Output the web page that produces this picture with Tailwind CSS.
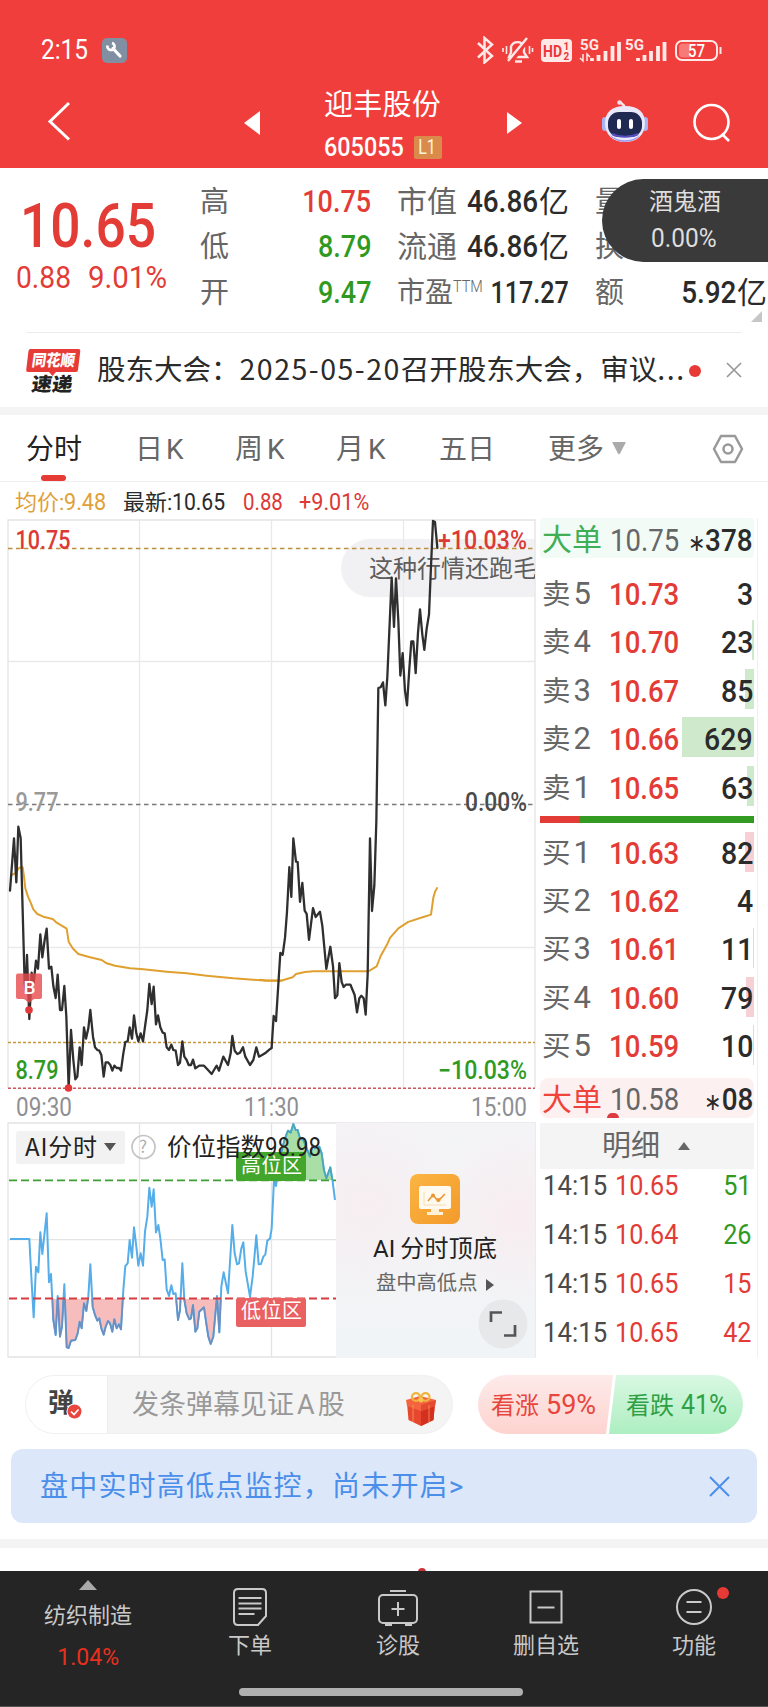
<!DOCTYPE html>
<html lang="zh-CN">
<head>
<meta charset="utf-8">
<title>迎丰股份 605055</title>
<script src="https://cdn.jsdelivr.net/npm/@tailwindcss/browser@4"></script>
</head>
<body class="w-[768px] h-[1707px] overflow-hidden bg-white font-[Roboto,'Noto_Sans_CJK_SC',sans-serif] text-[#2b2b2b]">
<div class="flex flex-col w-[768px] h-[1707px]">

<!-- header -->
<header class="h-[168px] shrink-0 bg-[#f03e3c] text-white flex flex-col">
  <div class="h-[84px] pt-[36px] pl-[41px] pr-[46px] flex justify-between">
    <div class="flex h-[28px] items-center">
      <span class="w-[61px] text-[28px] leading-[28px]"><span class="inline-block origin-left scale-x-[.87]">2:15</span></span>
      <svg class="w-[25px] h-[25px]" viewBox="0 0 25 25"><rect width="25" height="25" rx="5" fill="#8090a2"/><path d="M11 10.500l7 7.500" stroke="#fff" stroke-width="3.200" stroke-linecap="round"/><path d="M5.500 7.500a3.600 3.600 0 1 0 4.500-2.500" fill="none" stroke="#fff" stroke-width="2.600"/></svg>
    </div>
    <svg class="w-[246px] h-[28px]" viewBox="476 35 246 28" fill="none" stroke="#ffe9e7" stroke-width="2">
      <path d="M478 42l14 13-7.500 6.500V37l7.500 6.500-14 13" stroke-width="2.500"/>
      <path d="M509 56h18l-3-4.500v-6a7 7 0 0 0-13 0v6z" stroke-width="2.400"/><path d="M511 60l17-22" stroke="#f03e3c" stroke-width="5"/><path d="M508 60l19-23M515 60.500h7" stroke-width="2.400"/><path d="M506.500 45v8M503 47v4M529.500 45v8M532.500 47v4" stroke-width="1.600"/>
      <rect x="541" y="38" width="31" height="23" rx="4" fill="#ffe9e7" stroke="none"/>
      <g stroke="none" fill="#ffe9e7" font-family="Roboto" font-weight="500">
        <text x="543" y="56" font-size="17" fill="#e93a38" font-weight="700" textLength="19" lengthAdjust="spacingAndGlyphs">HD</text>
        <text x="563.500" y="49" font-size="10" fill="#e93a38" font-weight="700">1</text><text x="563.500" y="59" font-size="10" fill="#e93a38" font-weight="700">2</text>
        <text x="580" y="49" font-size="15" font-weight="700" textLength="19" lengthAdjust="spacingAndGlyphs">5G</text><text x="625" y="49" font-size="15" font-weight="700" textLength="19" lengthAdjust="spacingAndGlyphs">5G</text>
      </g>
      <path d="M592 60v-3M598.500 60v-6M605.500 60v-10M612.500 60v-15M619 60v-19M638 60v-3M644.500 60v-6M651 60v-10M658 60v-15M664.500 60v-19" stroke-width="3.800"/>
      <path d="M583 53v7l-3-3M587 60v-7l3 3" stroke-width="1.500"/>
      <path d="M683 42.500h7v14h-7a4 4 0 0 1-4-4v-6a4 4 0 0 1 4-4z" fill="#f77a78" stroke="none"/><rect x="676" y="40" width="41" height="19" rx="6"/><path d="M720.500 46v7"/>
      <text x="688" y="56" font-size="18" font-family="Roboto" font-weight="500" fill="#fff" stroke="none" textLength="17" lengthAdjust="spacingAndGlyphs">57</text>
    </svg>
  </div>
  <div class="h-[84px] flex items-start pl-[46px]">
    <svg class="w-[26px] h-[42px] mt-[17px]" viewBox="0 0 26 42"><path d="M23 2L4 20.500l19 18" fill="none" stroke="#fff" stroke-width="3"/></svg>
    <svg class="w-[16px] h-[24px] mt-[27px] ml-[172px]" viewBox="0 0 16 24"><path d="M16 0v24L0 12z" fill="#fff"/></svg>
    <div class="w-[245px] flex flex-col items-center">
      <h1 class="h-[38px] leading-[38px] text-[29px] tracking-[.3px] mt-[2px] whitespace-nowrap">迎丰股份</h1>
      <div class="flex items-center h-[24px] mt-[11px] w-[118px] justify-between">
        <span class="w-[80px] text-[26px] leading-[24px] font-medium"><span class="inline-block origin-left scale-x-[.9]">605055</span></span>
        <span class="w-[28px] h-[23px] leading-[23px] rounded-[2px] bg-[#da8b4b] text-[#fff4dd] text-[20px] text-center"><span class="inline-block scale-x-[.8]">L1</span></span>
      </div>
    </div>
    <svg class="w-[15px] h-[22px] mt-[28px] ml-[2px]" viewBox="0 0 15 22"><path d="M0 0l15 11L0 22z" fill="#fff"/></svg>
    <svg class="w-[46px] h-[46px] mt-[15px] ml-[80px]" viewBox="0 0 46 46"><path d="M22 8c0-4-4-3-4-6" fill="none" stroke="#fbe9ef" stroke-width="2.500"/><circle cx="17.500" cy="3.500" r="2.300" fill="#f3dfe8"/><rect x="0" y="18" width="6" height="14" rx="3" fill="#a9b4f2"/><rect x="40" y="18" width="6" height="14" rx="3" fill="#a9b4f2"/><path d="M23 7c14 0 20 7 20 17 0 12-8 19-20 19S3 36 3 24C3 14 9 7 23 7z" fill="#e9e9fb"/><path d="M8 36c8 7 22 7 30 0-5 9-25 9-30 0z" fill="#9c98ee"/><rect x="6" y="13" width="34" height="25" rx="11" fill="#202952"/><path d="M10 35c7 3.500 19 3.500 26 0" stroke="#554dc0" stroke-width="2" fill="none"/><rect x="15" y="20" width="4" height="10" rx="2" fill="#fff"/><rect x="27" y="20" width="4" height="10" rx="2" fill="#fff"/></svg>
    <svg class="w-[40px] h-[40px] mt-[19px] ml-[44px]" viewBox="0 0 40 40" fill="none" stroke="#fff" stroke-width="2.600"><circle cx="19.500" cy="19" r="17"/><path d="M30 31l7 7"/></svg>
  </div>
</header>

<!-- quote -->
<section class="relative h-[164px] shrink-0 pt-[10px] flex text-[#666]">
  <div class="w-[200px] text-[#e33c36]">
    <div class="mt-[20px] h-[56px] leading-[56px] pl-[20px] text-[62px] font-medium"><span class="inline-block origin-left scale-x-[.86]">10.65</span></div>
    <div class="flex mt-[8px] h-[32px] leading-[32px] pl-[16px] text-[31px]"><span class="w-[72px]"><span class="inline-block origin-left scale-x-[.91]">0.88</span></span><span class="inline-block origin-left scale-x-[.95]">9.01%</span></div>
  </div>
  <div class="w-[171px] text-[29px] leading-[48px]">
    <div class="flex justify-between h-[45px]"><span>高</span><span class="text-[31px] font-medium text-[#e33c36] origin-right scale-x-[.87]">10.75</span></div>
    <div class="flex justify-between h-[46px]"><span>低</span><span class="text-[31px] font-medium text-[#2f9a1f] origin-right scale-x-[.87]">8.79</span></div>
    <div class="flex justify-between h-[46px]"><span>开</span><span class="text-[31px] font-medium text-[#2f9a1f] origin-right scale-x-[.87]">9.47</span></div>
  </div>
  <div class="ml-[26px] w-[172px] text-[30px] leading-[48px]">
    <div class="flex justify-between h-[45px]"><span>市值</span><span class="flex text-[#2b2b2b]"><span class="text-[31px] font-medium origin-right scale-x-[.9]">46.86</span><span class="ml-[1px]">亿</span></span></div>
    <div class="flex justify-between h-[46px]"><span>流通</span><span class="flex text-[#2b2b2b]"><span class="text-[31px] font-medium origin-right scale-x-[.9]">46.86</span><span class="ml-[1px]">亿</span></span></div>
    <div class="flex h-[46px]"><span class="w-[56px] text-[28px]">市盈</span><span class="w-[28px] text-[17px] font-light -mt-[7px]"><span class="inline-block origin-left scale-x-[.85]">TTM</span></span><span class="w-[88px] flex justify-end text-[31px] font-medium text-[#2b2b2b]"><span class="origin-right scale-x-[.81]">117.27</span></span></div>
  </div>
  <div class="ml-[26px] w-[172px] text-[29px] leading-[48px]">
    <div class="h-[45px]">量</div>
    <div class="h-[46px]">换</div>
    <div class="flex justify-between h-[46px]"><span>额</span><span class="flex text-[#2b2b2b] text-[30px]"><span class="text-[31px] font-medium origin-right scale-x-[.9]">5.92</span><span class="ml-[1px]">亿</span></span></div>
  </div>
  <div class="absolute right-0 top-[11px] w-[166px] h-[83px] rounded-l-full bg-[#3a3a3a] text-[#dedede] pl-[47px] pt-[6px]">
    <div class="h-[34px] leading-[35px] text-[24px]">酒鬼酒</div>
    <div class="h-[36px] leading-[39px] text-[26px] pl-[2px]"><span class="inline-block origin-left scale-x-[.94]">0.00%</span></div>
  </div>
  <svg class="absolute right-[6px] top-[143px] w-[11px] h-[11px]" viewBox="0 0 11 11"><path d="M11 0v11H0z" fill="#c6c6c6"/></svg>
</section>

<!-- news -->
<section class="h-[75px] shrink-0 mx-[26px] border-t border-[#ededed] flex items-center">
  <svg class="w-[56px] h-[48px] mt-[1px]" viewBox="0 0 56 48"><path d="M4.500 2h48q2 0 1.800 2l-2.300 19q-.3 2-2 2H30l-3.500 4-3.500-4H2q-2 0-1.800-2l2.300-19q.3-2 2-2z" fill="#e63b37"/><g font-family="'Noto Sans CJK SC'" font-weight="900" transform="skewX(-8)"><text x="8" y="19.500" font-size="16" fill="#fff" textLength="43" lengthAdjust="spacingAndGlyphs">同花顺</text><text x="11" y="44" font-size="19" fill="#222" textLength="41" lengthAdjust="spacingAndGlyphs">速递</text></g></svg>
  <p class="ml-[15px] -mt-[4px] w-[592px] text-[28.500px] leading-[40px] whitespace-nowrap font-['Noto_Sans_CJK_SC',sans-serif]">股东大会：<span class="tracking-[1.500px]">2025-05-20</span>召开股东大会，审议<span class="tracking-[1.500px]">...</span></p>
  <span class="w-[12px] h-[12px] rounded-full bg-[#e73a36] mt-[1px]"></span>
  <svg class="w-[16px] h-[16px] ml-[25px]" viewBox="0 0 16 16"><path d="M1 1l14 14M15 1L1 15" stroke="#999" stroke-width="1.700"/></svg>
</section>
<div class="h-[8px] shrink-0 bg-[#f4f4f5]"></div>

<!-- period tabs -->
<nav class="h-[67px] shrink-0 border-b border-[#efefef] flex text-[28px] leading-[69px] text-[#666] whitespace-nowrap">
  <div class="ml-[26px] w-[109px] flex flex-col text-[#222]"><span class="h-[60px]">分时</span><span class="ml-[15px] w-[25px] h-[6px] rounded-full bg-[#e63b35]"></span></div>
  <span class="w-[100px]">日<span class="ml-[3px]">K</span></span>
  <span class="w-[101px]">周<span class="ml-[4px]">K</span></span>
  <span class="w-[103px]">月<span class="ml-[4px]">K</span></span>
  <span class="w-[109px]">五日</span>
  <span class="w-[64px]">更多</span>
  <svg class="w-[14px] h-[13px] mt-[27px]" viewBox="0 0 14 13"><path d="M1 0h12q1 0 .5 1L8 11.500q-1 1.500-2 0L.5 1Q0 0 1 0z" fill="#aaa"/></svg>
  <svg class="w-[32px] h-[30px] mt-[19px] ml-[86px]" viewBox="0 0 32 30" fill="none" stroke="#999" stroke-width="2.500" stroke-linejoin="round"><path d="M9 2h14l7 13-7 13H9L2 15z"/><circle cx="16" cy="15" r="4.500"/></svg>
</nav>

<!-- legend -->
<div class="h-[36px] shrink-0 flex pl-[15px] leading-[40px] text-[22px] whitespace-nowrap">
  <span class="w-[108px] text-[#e0a03a]">均价:<span class="inline-block origin-left scale-x-[.92] text-[23.500px]">9.48</span></span>
  <span class="w-[120px]">最新:<span class="inline-block origin-left scale-x-[.9] text-[23.500px]">10.65</span></span>
  <span class="w-[56px] text-[#dc3a36]"><span class="inline-block origin-left scale-x-[.87] text-[23.500px]">0.88</span></span>
  <span class="text-[#dc3a36]"><span class="inline-block origin-left scale-x-[.92] text-[23.500px]">+9.01%</span></span>
</div>

<!-- chart and order book -->
<main class="h-[841px] shrink-0 flex">
  <div class="w-[536px] flex flex-col">
    <svg class="w-[536px] h-[604px] shrink-0" viewBox="0 518 536 604">
      <path d="M139.500 520v568M271.500 520v568M403.500 520v568M8 661.500h527M8 947.500h527" stroke="#e9e9e9" stroke-width="1.300"/>
      <path d="M8 1088V520h527v568" fill="none" stroke="#e4e4e4" stroke-width="1.300"/>
      <path d="M535 539H370a29 29 0 0 0 0 58h165z" fill="#e9e9eb" fill-opacity=".62"/>
      <svg x="341" y="539" width="194" height="58"><text x="28" y="38" font-size="24" fill="#5e5e5e" font-family="'Noto Sans CJK SC'">这种行情还跑毛</text></svg>
      <path d="M8 548.500h527" stroke="#bd8f3f" stroke-width="1.300" stroke-dasharray="4.500 3.500"/>
      <path d="M8 804.500h527" stroke="#777" stroke-width="1.300" stroke-dasharray="4.500 3.500"/>
      <path d="M8 1042.600h527" stroke="#c9963a" stroke-width="1.500" stroke-dasharray="3 2"/>
      <path d="M8 1088.300h527" stroke="#d0525a" stroke-width="1.500" stroke-dasharray="3 2"/>
      <g fill="none" stroke-linejoin="round" stroke-linecap="round">
        <g stroke="#e0a030" stroke-width="2">
          <polyline vector-effect="non-scaling-stroke" transform="translate(0 700) scale(.33333)" points="36,525 45,520 58,503 68,502 72,530 76,565 84,590 92,608 100,628 112,642 130,650 158,657 170,668 200,686 206,725 218,745 235,762 270,772 305,780 320,790 345,797 390,805 430,808 500,815 560,820 620,827 700,835 740,838 800,842 845,842"/>
          <polyline vector-effect="non-scaling-stroke" transform="translate(260 500) scale(.33333 .40177)" points="0,1194 20,1196 65,1196 98,1188 108,1180 135,1175 160,1173 325,1173 350,1161 362,1135 382,1105 390,1090 415,1066 445,1050 490,1038 513,1032 520,990 525,975 531,966"/>
        </g>
        <g stroke="#2f2f2f" stroke-width="2.300">
          <polyline vector-effect="non-scaling-stroke" transform="translate(0 700) scale(.33333)" points="30,572 42,415 49,547 55,380 62,415 66,560 74,850 77,870 81,765 88,957 95,818 101,850 108,782 114,806 121,703 127,772 134,720 140,686 147,806 154,800 160,858 167,894 173,824 180,930 186,930 193,858 199,950 206,1164 213,990 220,1080 226,1138 232,1130 239,1042 245,1095 252,982 258,1016 265,985 271,930 279,1010 285,1042 292,1050 298,1052 304,1065 311,1130 317,1087 324,1087 331,1095 337,1112 343,1097 350,1104 357,1104 363,1112 370,1060 376,1026 383,1024 389,982 396,1016 402,946 409,1000 415,1024 422,1000 429,1024 435,980 442,930 448,852 455,912 461,860 468,973 474,946 481,982 488,998 494,1000 500,1042 507,1050 514,1034 520,1050 527,1052 534,1095 540,1088 547,1024 553,1070 560,1080 566,1095 573,1095 579,1079 586,1105 598,1097 612,1097 622,1108 635,1122 642,1110 650,1097 657,1112 670,1070 684,1095 692,1060 697,1008 704,1052 712,1062 720,1058 729,1042 736,1070 750,1095 760,1080 769,1042 777,1070 785,1066 795,1060 808,1049 815,1044"/>
          <polyline vector-effect="non-scaling-stroke" transform="translate(260 500) scale(.33333 .40177)" points="35,1362 41,1284 48,1297 61,1127 68,1132 75,1090 81,1025 88,914 94,988 100,842 108,900 113,901 120,1000 127,953 134,1022 140,1030 147,1095 159,1016 167,1038 180,1025 187,1060 199,1167 211,1112 219,1160 225,1240 232,1233 238,1153 245,1200 251,1212 258,1206 271,1206 284,1232 291,1275 298,1240 304,1234 311,1240 317,1281 323,1180 330,842 336,1023 343,960 349,800 355,468 362,466 369,454 376,511 382,440 395,193 402,316 408,195 415,300 421,437 428,381 435,475 441,511 448,420 454,352 460,352 467,431 474,330 480,272 487,335 493,373 500,320 507,285 513,165 519,52 525,55 530,100 532,119"/>
        </g>
      </g>
      <path d="M18 973.500h22q2 0 2 2V997q0 2-2 2h-6l-5 4-5-4h-6q-2 0-2-2v-21.500q0-2 2-2z" fill="#e84a4c" fill-opacity=".8"/>
      <circle cx="29" cy="1010" r="3.800" fill="#e23a3a"/><circle cx="68.500" cy="1088" r="3.800" fill="#e23a3a"/>
      <g font-family="Roboto" font-size="25">
        <text x="23.500" y="994" font-size="19" fill="#fff" font-weight="500">B</text>
        <g font-weight="500">
          <text x="15.500" y="549" fill="#dc3a36" textLength="55" lengthAdjust="spacingAndGlyphs">10.75</text>
          <text x="438" y="549" fill="#dc3a36" textLength="89" lengthAdjust="spacingAndGlyphs">+10.03%</text>
          <text x="15.500" y="811" fill="#9a9a9a" textLength="43" lengthAdjust="spacingAndGlyphs">9.77</text>
          <text x="465" y="811" fill="#4a4a4a" textLength="62" lengthAdjust="spacingAndGlyphs">0.00%</text>
          <text x="15.500" y="1078.500" fill="#2f9a1f" textLength="43" lengthAdjust="spacingAndGlyphs">8.79</text>
          <text x="438" y="1078.500" fill="#2f9a1f" textLength="89" lengthAdjust="spacingAndGlyphs">−10.03%</text>
        </g>
        <g fill="#8e8e93"><text x="16" y="1116" textLength="56" lengthAdjust="spacingAndGlyphs">09:30</text><text x="244" y="1116" textLength="55" lengthAdjust="spacingAndGlyphs">11:30</text><text x="471" y="1116" textLength="56" lengthAdjust="spacingAndGlyphs">15:00</text></g>
      </g>
    </svg>
    <div class="flex h-[237px]">
      <svg class="w-[336px] h-[237px]" viewBox="0 1122 336 237">
        <defs>
          <clipPath id="low"><rect x="155" y="566" width="640" height="170"/></clipPath>
          <clipPath id="high"><rect x="800" y="30" width="208" height="181"/></clipPath>
          <path id="idx" vector-effect="non-scaling-stroke" d="M30,387 88,387 94,500 101,622 108,470 115,487 121,367 127,432 140,310 147,517 153,492 160,630 167,675 173,558 180,680 186,650 193,523 200,712 206,714 213,692 226,690 233,670 239,635 245,655 252,580 259,603 265,560 271,463 278,590 285,615 292,632 298,625 304,655 311,674 317,650 324,633 330,640 337,665 343,628 350,655 357,643 363,658 370,540 376,468 383,460 389,390 396,443 402,352 409,410 415,467 422,430 429,467 435,365 442,320 448,233 455,290 461,238 468,367 475,345 481,385 488,450 494,448 500,538 507,558 514,526 520,552 527,550 534,630 540,600 547,460 553,570 560,610 568,628 573,625 579,585 586,665 592,655 598,605 612,592 618,635 625,680 632,702 640,680 651,558 658,667 664,530 671,487 684,550 697,345 704,430 711,463 717,460 724,415 730,397 737,485 750,560 758,500 769,376 776,463 783,462 790,440 796,434 802,392 810,386 815,355 822,210 828,228 835,180 848,110 855,85 864,62 872,68 880,42 887,60 893,60 900,85 910,90 920,115 930,140 938,105 945,115 958,110 965,130 972,180 979,205 991,172 998,215 1005,270"/>
        </defs>
        <path d="M336 1123H8v234h328M8 1239.700h328M139.500 1123v234M271.500 1123v234" fill="none" stroke="#e4e4e4" stroke-width="1.300"/>
        <g transform="translate(0 1110) scale(.33333)">
          <g clip-path="url(#low)" fill="#f7bcbc"><path d="M155,566 160,630 167,675 173,558 180,680 186,650 193,523 200,712 206,714 213,692 226,690 233,670 239,635 245,655 252,580 259,603 265,566 278,566 278,590 285,615 292,632 298,625 304,655 311,674 317,650 324,633 330,640 337,665 343,628 350,655 357,643 363,658 369,566zM552,566 560,610 568,628 573,625 579,585 586,665 592,655 598,605 612,592 618,635 625,680 632,702 640,680 651,558 658,667 662,566z"/></g>
          <g clip-path="url(#high)" fill="#a9dea6"><path d="M822,211 835,180 848,110 855,85 864,62 872,68 880,42 887,60 893,60 900,85 910,90 920,115 930,140 938,105 945,115 958,110 965,130 972,180 979,205 991,172 998,211z"/></g>
          <use href="#idx" fill="none" stroke="#55aeea" stroke-width="2" stroke-linejoin="round"/>
          <g fill="none" stroke-width="1.600" stroke-linejoin="round"><g clip-path="url(#low)"><use href="#idx" stroke="#6f8ec0"/></g><g clip-path="url(#high)"><use href="#idx" stroke="#4aa8b4"/></g></g>
        </g>
        <path d="M9 1180.300h327" stroke="#3f9f35" stroke-width="1.800" stroke-dasharray="8 4"/>
        <path d="M9 1298.500h327" stroke="#d63c40" stroke-width="1.800" stroke-dasharray="8 4"/>
        <rect x="236" y="1152" width="70" height="29" rx="2" fill="#42a52c"/><rect x="236" y="1298" width="70" height="29" rx="2" fill="#ea6163"/>
        <rect x="16" y="1131" width="109" height="33" rx="2" fill="#f2f2f3"/><path d="M104 1143h12l-6 8z" fill="#555"/>
        <circle cx="143.500" cy="1147" r="11.500" fill="none" stroke="#c4c4c4" stroke-width="1.700"/>
        <g font-family="'Noto Sans CJK SC'">
          <text x="241" y="1172.500" font-size="20" fill="#fff" textLength="61">高位区</text><text x="241" y="1318" font-size="20" fill="#fff" textLength="61">低位区</text>
          <text x="25" y="1156" font-size="24" fill="#222" textLength="72">AI分时</text>
          <text x="139" y="1153" font-size="17" fill="#b0b0b0">?</text>
          <text x="167" y="1156" font-size="24.500" fill="#222">价位指数</text>
        </g>
        <text x="265" y="1156" font-size="25" font-family="Roboto" fill="#222" textLength="56" lengthAdjust="spacingAndGlyphs">98.98</text>
      </svg>
      <div class="w-[200px] h-[236px] border-t border-r border-[#ebebed] bg-[radial-gradient(circle_at_15%_35%,#f7eef1_0%,#f7eef100_45%),radial-gradient(circle_at_90%_40%,#f8edf0_0%,#f8edf000_40%),linear-gradient(#f4f4f6,#f1f4f6)] flex flex-col pt-[51px] whitespace-nowrap">
        <svg class="w-[50px] h-[50px] ml-[74px]" viewBox="0 0 50 50"><defs><linearGradient id="or" x2="1" y2="1"><stop stop-color="#fbb542"/><stop offset="1" stop-color="#f39a2c"/></linearGradient></defs><rect width="50" height="50" rx="8" fill="url(#or)"/><rect x="9" y="12" width="32" height="23" rx="2" fill="#fffaf0"/><path d="M21 35h8v3h4v3H17v-3h4z" fill="#fff1d8"/><path d="M14 18v13h22" fill="none" stroke="#f6dcb5"/><path d="M18 27l5-6 5 6 7-7" fill="none" stroke="#eb9632" stroke-width="1.600"/><circle cx="23" cy="21.500" r="2" fill="#eb9632"/><circle cx="28.500" cy="26" r="2" fill="#eb9632"/></svg>
        <div class="ml-[37px] mt-[6px] h-[38px] leading-[38px] text-[24px] text-[#222]">AI<span class="ml-[5px] tracking-[.3px]">分时顶底</span></div>
        <div class="ml-[40px] h-[31px] leading-[31px] text-[20.300px] text-[#666] flex items-center">盘中高低点<svg class="w-[8px] h-[12px] ml-[9px] mt-[2px]" viewBox="0 0 8 12"><path d="M0 0l8 6-8 6z" fill="#555"/></svg></div>
        <svg class="w-[50px] h-[50px] ml-[142px]" viewBox="0 0 50 50"><circle cx="25" cy="25" r="24.500" fill="#e7e8ea"/><path d="M13 23V13.500h11M26 36.500h11V26" fill="none" stroke="#555" stroke-width="2.700"/></svg>
      </div>
    </div>
  </div>

  <div class="ml-[4px] w-[218px] pr-[3px] h-[839px] border-r border-[#f0f0f0] flex flex-col text-[29px] text-[#666] whitespace-nowrap">
    <div class="h-[40px] shrink-0 rounded bg-[#f2fbf6] pl-[2px] pr-px flex leading-[44px]"><span class="w-[68px] shrink-0 text-[30px] text-[#3fae55]">大单</span><span class="w-[67px] shrink-0 text-[32px]"><span class="inline-block origin-left scale-x-[.86]">10.75</span></span><span class="flex-1 min-w-0 flex justify-end text-[32px] font-medium text-[#2b2b2b]"><span class="origin-right scale-x-[.87]"><span class="text-[24px]">∗</span>378</span></span></div>
    <div class="mt-[14px] flex flex-col gap-[8.400px]">
      <div class="h-[40px] pl-[2px] pr-px flex leading-[44px]"><span class="w-[67px] text-[28.500px]">卖<span class="inline-block ml-[3px] text-[31px]">5</span></span><span class="w-[67px] text-[32px] font-medium text-[#e33c36]"><span class="inline-block origin-left scale-x-[.86]">10.73</span></span><span class="flex-1 flex justify-end text-[32px] font-medium text-[#2b2b2b]"><span class="origin-right scale-x-[.89]">3</span></span></div>
      <div class="h-[40px] pl-[2px] pr-px flex leading-[44px] bg-[linear-gradient(#cfe9cd,#cfe9cd)] bg-no-repeat bg-right bg-size-[2px_40px]"><span class="w-[67px] text-[28.500px]">卖<span class="inline-block ml-[3px] text-[31px]">4</span></span><span class="w-[67px] text-[32px] font-medium text-[#e33c36]"><span class="inline-block origin-left scale-x-[.86]">10.70</span></span><span class="flex-1 flex justify-end text-[32px] font-medium text-[#2b2b2b]"><span class="origin-right scale-x-[.89]">23</span></span></div>
      <div class="h-[40px] pl-[2px] pr-px flex leading-[44px] bg-[linear-gradient(#cfe9cd,#cfe9cd)] bg-no-repeat bg-right bg-size-[9px_40px]"><span class="w-[67px] text-[28.500px]">卖<span class="inline-block ml-[3px] text-[31px]">3</span></span><span class="w-[67px] text-[32px] font-medium text-[#e33c36]"><span class="inline-block origin-left scale-x-[.86]">10.67</span></span><span class="flex-1 flex justify-end text-[32px] font-medium text-[#2b2b2b]"><span class="origin-right scale-x-[.89]">85</span></span></div>
      <div class="h-[40px] pl-[2px] pr-px flex leading-[44px] bg-[linear-gradient(#cfe9cd,#cfe9cd)] bg-no-repeat bg-right bg-size-[72px_40px]"><span class="w-[67px] text-[28.500px]">卖<span class="inline-block ml-[3px] text-[31px]">2</span></span><span class="w-[67px] text-[32px] font-medium text-[#e33c36]"><span class="inline-block origin-left scale-x-[.86]">10.66</span></span><span class="flex-1 flex justify-end text-[32px] font-medium text-[#2b2b2b]"><span class="origin-right scale-x-[.89]">629</span></span></div>
      <div class="h-[40px] pl-[2px] pr-px flex leading-[44px] bg-[linear-gradient(#cfe9cd,#cfe9cd)] bg-no-repeat bg-right bg-size-[7px_40px]"><span class="w-[67px] text-[28.500px]">卖<span class="inline-block ml-[3px] text-[31px]">1</span></span><span class="w-[67px] text-[32px] font-medium text-[#e33c36]"><span class="inline-block origin-left scale-x-[.86]">10.65</span></span><span class="flex-1 flex justify-end text-[32px] font-medium text-[#2b2b2b]"><span class="origin-right scale-x-[.89]">63</span></span></div>
    </div>
    <div class="mt-[10px] h-[7px] shrink-0 flex"><span class="w-[40px] bg-[#e33c36]"></span><span class="flex-1 bg-[#339a22]"></span></div>
    <div class="mt-[9px] flex flex-col gap-[8.400px]">
      <div class="h-[40px] pl-[2px] pr-px flex leading-[42px] bg-[linear-gradient(#f7d0d5,#f7d0d5)] bg-no-repeat bg-right bg-size-[9px_40px]"><span class="w-[67px] text-[28.500px]">买<span class="inline-block ml-[3px] text-[31px]">1</span></span><span class="w-[67px] text-[32px] font-medium text-[#e33c36]"><span class="inline-block origin-left scale-x-[.86]">10.63</span></span><span class="flex-1 flex justify-end text-[32px] font-medium text-[#2b2b2b]"><span class="origin-right scale-x-[.89]">82</span></span></div>
      <div class="h-[40px] pl-[2px] pr-px flex leading-[42px]"><span class="w-[67px] text-[28.500px]">买<span class="inline-block ml-[3px] text-[31px]">2</span></span><span class="w-[67px] text-[32px] font-medium text-[#e33c36]"><span class="inline-block origin-left scale-x-[.86]">10.62</span></span><span class="flex-1 flex justify-end text-[32px] font-medium text-[#2b2b2b]"><span class="origin-right scale-x-[.89]">4</span></span></div>
      <div class="h-[40px] pl-[2px] pr-px flex leading-[42px] bg-[linear-gradient(#f7d0d5,#f7d0d5)] bg-no-repeat bg-right bg-size-[1px_40px]"><span class="w-[67px] text-[28.500px]">买<span class="inline-block ml-[3px] text-[31px]">3</span></span><span class="w-[67px] text-[32px] font-medium text-[#e33c36]"><span class="inline-block origin-left scale-x-[.86]">10.61</span></span><span class="flex-1 flex justify-end text-[32px] font-medium text-[#2b2b2b]"><span class="origin-right scale-x-[.89]">11</span></span></div>
      <div class="h-[40px] pl-[2px] pr-px flex leading-[42px] bg-[linear-gradient(#f7d0d5,#f7d0d5)] bg-no-repeat bg-right bg-size-[8px_40px]"><span class="w-[67px] text-[28.500px]">买<span class="inline-block ml-[3px] text-[31px]">4</span></span><span class="w-[67px] text-[32px] font-medium text-[#e33c36]"><span class="inline-block origin-left scale-x-[.86]">10.60</span></span><span class="flex-1 flex justify-end text-[32px] font-medium text-[#2b2b2b]"><span class="origin-right scale-x-[.89]">79</span></span></div>
      <div class="h-[40px] pl-[2px] pr-px flex leading-[42px] bg-[linear-gradient(#f7d0d5,#f7d0d5)] bg-no-repeat bg-right bg-size-[1px_40px]"><span class="w-[67px] text-[28.500px]">买<span class="inline-block ml-[3px] text-[31px]">5</span></span><span class="w-[67px] text-[32px] font-medium text-[#e33c36]"><span class="inline-block origin-left scale-x-[.86]">10.59</span></span><span class="flex-1 flex justify-end text-[32px] font-medium text-[#2b2b2b]"><span class="origin-right scale-x-[.89]">10</span></span></div>
    </div>
    <div class="relative mt-[13px] h-[40px] shrink-0 rounded-lg bg-[#fdf0f1] pl-[2px] pr-px flex leading-[43px]"><span class="w-[68px] shrink-0 text-[30px] text-[#f0433c]">大单</span><span class="w-[67px] shrink-0 text-[32px]"><span class="inline-block origin-left scale-x-[.86]">10.58</span></span><span class="flex-1 min-w-0 flex justify-end text-[32px] font-medium text-[#2b2b2b]"><span class="origin-right scale-x-[.87]"><span class="text-[24px]">∗</span>08</span></span><span class="absolute left-[67px] bottom-0 w-[12px] h-[5px] rounded-t-full bg-[#dd3b42]"></span></div>
    <div class="mt-[5px] h-[46px] shrink-0 bg-[#f4f4f4] flex items-center pl-[62px] leading-[46px] text-[29px]">明细<svg class="w-[12px] h-[8px] ml-[18px]" viewBox="0 0 12 8"><path d="M6 0l6 8H0z" fill="#666"/></svg></div>
    <div class="flex flex-col text-[28px] leading-[32px] gap-[17px] mt-[1px] pl-[3px] pr-[3px]">
      <div class="flex h-[32px]"><span class="w-[72px] text-[#4a4a4a]"><span class="inline-block origin-left scale-x-[.92]">14:15</span></span><span class="w-[70px] text-[#e33c36]"><span class="inline-block origin-left scale-x-[.9]">10.65</span></span><span class="flex-1 flex justify-end text-[#2f9a1f]"><span class="origin-right scale-x-[.9]">51</span></span></div>
      <div class="flex h-[32px]"><span class="w-[72px] text-[#4a4a4a]"><span class="inline-block origin-left scale-x-[.92]">14:15</span></span><span class="w-[70px] text-[#e33c36]"><span class="inline-block origin-left scale-x-[.9]">10.64</span></span><span class="flex-1 flex justify-end text-[#2f9a1f]"><span class="origin-right scale-x-[.9]">26</span></span></div>
      <div class="flex h-[32px]"><span class="w-[72px] text-[#4a4a4a]"><span class="inline-block origin-left scale-x-[.92]">14:15</span></span><span class="w-[70px] text-[#e33c36]"><span class="inline-block origin-left scale-x-[.9]">10.65</span></span><span class="flex-1 flex justify-end text-[#e33c36]"><span class="origin-right scale-x-[.9]">15</span></span></div>
      <div class="flex h-[32px]"><span class="w-[72px] text-[#4a4a4a]"><span class="inline-block origin-left scale-x-[.92]">14:15</span></span><span class="w-[70px] text-[#e33c36]"><span class="inline-block origin-left scale-x-[.9]">10.65</span></span><span class="flex-1 flex justify-end text-[#e33c36]"><span class="origin-right scale-x-[.9]">42</span></span></div>
    </div>
  </div>
</main>

<!-- comment bar -->
<section class="h-[90px] shrink-0 pt-[16px] pl-[25px] flex">
  <div class="w-[428px] h-[59px] rounded-full bg-[#f4f4f4] border border-[#f0f0f0] overflow-hidden flex items-center">
    <div class="w-[82px] h-full bg-white border-r border-[#ececec] flex items-center">
      <svg class="w-[36px] h-[36px] ml-[22px]" viewBox="0 0 36 36"><text x="0" y="25" font-size="26" font-weight="700" font-family="'Noto Sans CJK SC'" fill="#444">弹</text><circle cx="26.500" cy="24.500" r="8" fill="#fff"/><circle cx="26.500" cy="24.500" r="7" fill="#e8473f"/><path d="M23 24.500l3 3 4.500-5" fill="none" stroke="#fff" stroke-width="1.700"/></svg>
    </div>
    <span class="ml-[24px] mt-[2px] w-[273px] text-[27px] text-[#999] whitespace-nowrap">发条弹幕见证<span class="mx-[3px]">A</span>股</span>
    <svg class="w-[32px] h-[36px] mt-[8px]" viewBox="0 0 32 36"><path d="M2 12l14 5 14-5-1.500 17L16 35 3.500 29z" fill="#e8472f"/><path d="M16 17l14-5-1.500 17L16 35z" fill="#d3301f"/><path d="M1 9l14-4 16 4-1 6-14 5L2 15z" fill="#f3643f"/><path d="M16 14l15-5-1 6-14 5z" fill="#e54a30"/><path d="M8 14v17M24 14v17" stroke="#f8a45c" stroke-width="1.500" opacity=".5"/><ellipse cx="11" cy="6" rx="4" ry="3.800" fill="none" stroke="#f0b43c" stroke-width="2.300"/><ellipse cx="20.500" cy="6" rx="4" ry="3.800" fill="none" stroke="#f0b43c" stroke-width="2.300"/><circle cx="16" cy="9" r="2.500" fill="#f6c450"/></svg>
  </div>
  <div class="ml-[25px] w-[265px] h-[59px] rounded-full overflow-hidden flex text-[24px] leading-[60px] whitespace-nowrap">
    <div class="w-[135px] pl-[13px] text-[#e8453c] bg-linear-to-b from-[#fdebea] to-[#fdd3cf] [clip-path:polygon(0_0,100%_0,calc(100%-7px)_100%,0_100%)]">看涨 <span class="inline-block ml-[1px] origin-left text-[27px]">59%</span></div>
    <div class="-ml-[4px] flex-1 pl-[17px] text-[#2fa046] bg-linear-to-b from-[#d9f8e3] to-[#adeec1] [clip-path:polygon(7px_0,100%_0,100%_100%,0_100%)]">看跌 <span class="inline-block ml-[1px] origin-left scale-x-[.92] text-[27px]">41%</span></div>
  </div>
</section>

<div class="h-[74px] shrink-0 mx-[11px] rounded-[12px] bg-[#dce7fa] text-[#4b8fea] flex items-center justify-between pl-[29px] pr-[27px]">
  <span class="mt-[2px] text-[28px] tracking-[1.200px] whitespace-nowrap">盘中实时高低点监控，尚未开启&gt;</span>
  <svg class="w-[21px] h-[21px]" viewBox="0 0 21 21"><path d="M1 1l19 19M20 1L1 20" stroke="#4b8fea" stroke-width="2"/></svg>
</div>
<div class="h-[9px] shrink-0 mt-[16px] bg-[#f4f4f4]"></div>
<div class="h-[23px] shrink-0 flex items-end overflow-hidden"><span class="ml-[418px] w-[8px] h-[8px] -mb-[5px] rounded-full bg-[#c8343a]"></span></div>

<!-- bottom bar -->
<footer class="h-[136px] shrink-0 bg-[#252525] text-[#c9c9c9] text-[22px] leading-[28px] border-b border-[#555] flex flex-col">
  <div class="h-[116px] flex">
    <div class="w-[176px] flex flex-col items-center pt-[9px]">
      <svg class="w-[18px] h-[10px]" viewBox="0 0 18 10"><path d="M9 0l9 10H0z" fill="#aaa"/></svg>
      <span class="mt-[12px]">纺织制造</span>
      <span class="mt-[13px] text-[24px] text-[#e8301f] scale-x-[.96]">1.04%</span>
    </div>
    <div class="w-[148px] flex flex-col items-center pt-[16px]">
      <svg class="w-[36px] h-[40px]" viewBox="0 0 36 40" fill="none" stroke="#c9c9c9" stroke-width="2"><path d="M6 2h24q4 0 4 4v23l-8 9H6q-4 0-4-4V6q0-4 4-4z"/><path d="M6.500 11h23M6.500 16.500h23M6.500 21.500h23M6.500 27h16"/></svg>
      <span class="mt-[5px]">下单</span>
    </div>
    <div class="w-[148px] flex flex-col items-center pt-[16px]">
      <svg class="w-[40px] h-[40px]" viewBox="0 0 40 40" fill="none" stroke="#c9c9c9" stroke-width="2"><path d="M12 4h16"/><rect x="1" y="8" width="38" height="28" rx="4"/><path d="M20 15v14M13.500 22h13"/><path d="M7 37.500h7M27 37.500h7" stroke-width="3"/></svg>
      <span class="mt-[5px]">诊股</span>
    </div>
    <div class="w-[148px] flex flex-col items-center pt-[16px]">
      <svg class="w-[40px] h-[40px]" viewBox="0 0 40 40" fill="none" stroke="#c9c9c9" stroke-width="2"><rect x="4.500" y="4.500" width="31" height="31"/><path d="M11.500 20.500h17"/></svg>
      <span class="mt-[5px]">删自选</span>
    </div>
    <div class="relative w-[148px] flex flex-col items-center pt-[16px]">
      <svg class="w-[40px] h-[40px]" viewBox="0 0 40 40" fill="none" stroke="#c9c9c9" stroke-width="2"><circle cx="20" cy="20" r="17"/><path d="M12.500 15h15M12.500 25h15"/></svg>
      <span class="mt-[5px]">功能</span>
      <span class="absolute left-[97px] top-[16px] w-[12px] h-[12px] rounded-full bg-[#e73a36]"></span>
    </div>
  </div>
  <div class="ml-[239px] mt-[1px] w-[284px] h-[8px] rounded-full bg-[#b0b0b0]"></div>
</footer>
</div>
</body>
</html>
